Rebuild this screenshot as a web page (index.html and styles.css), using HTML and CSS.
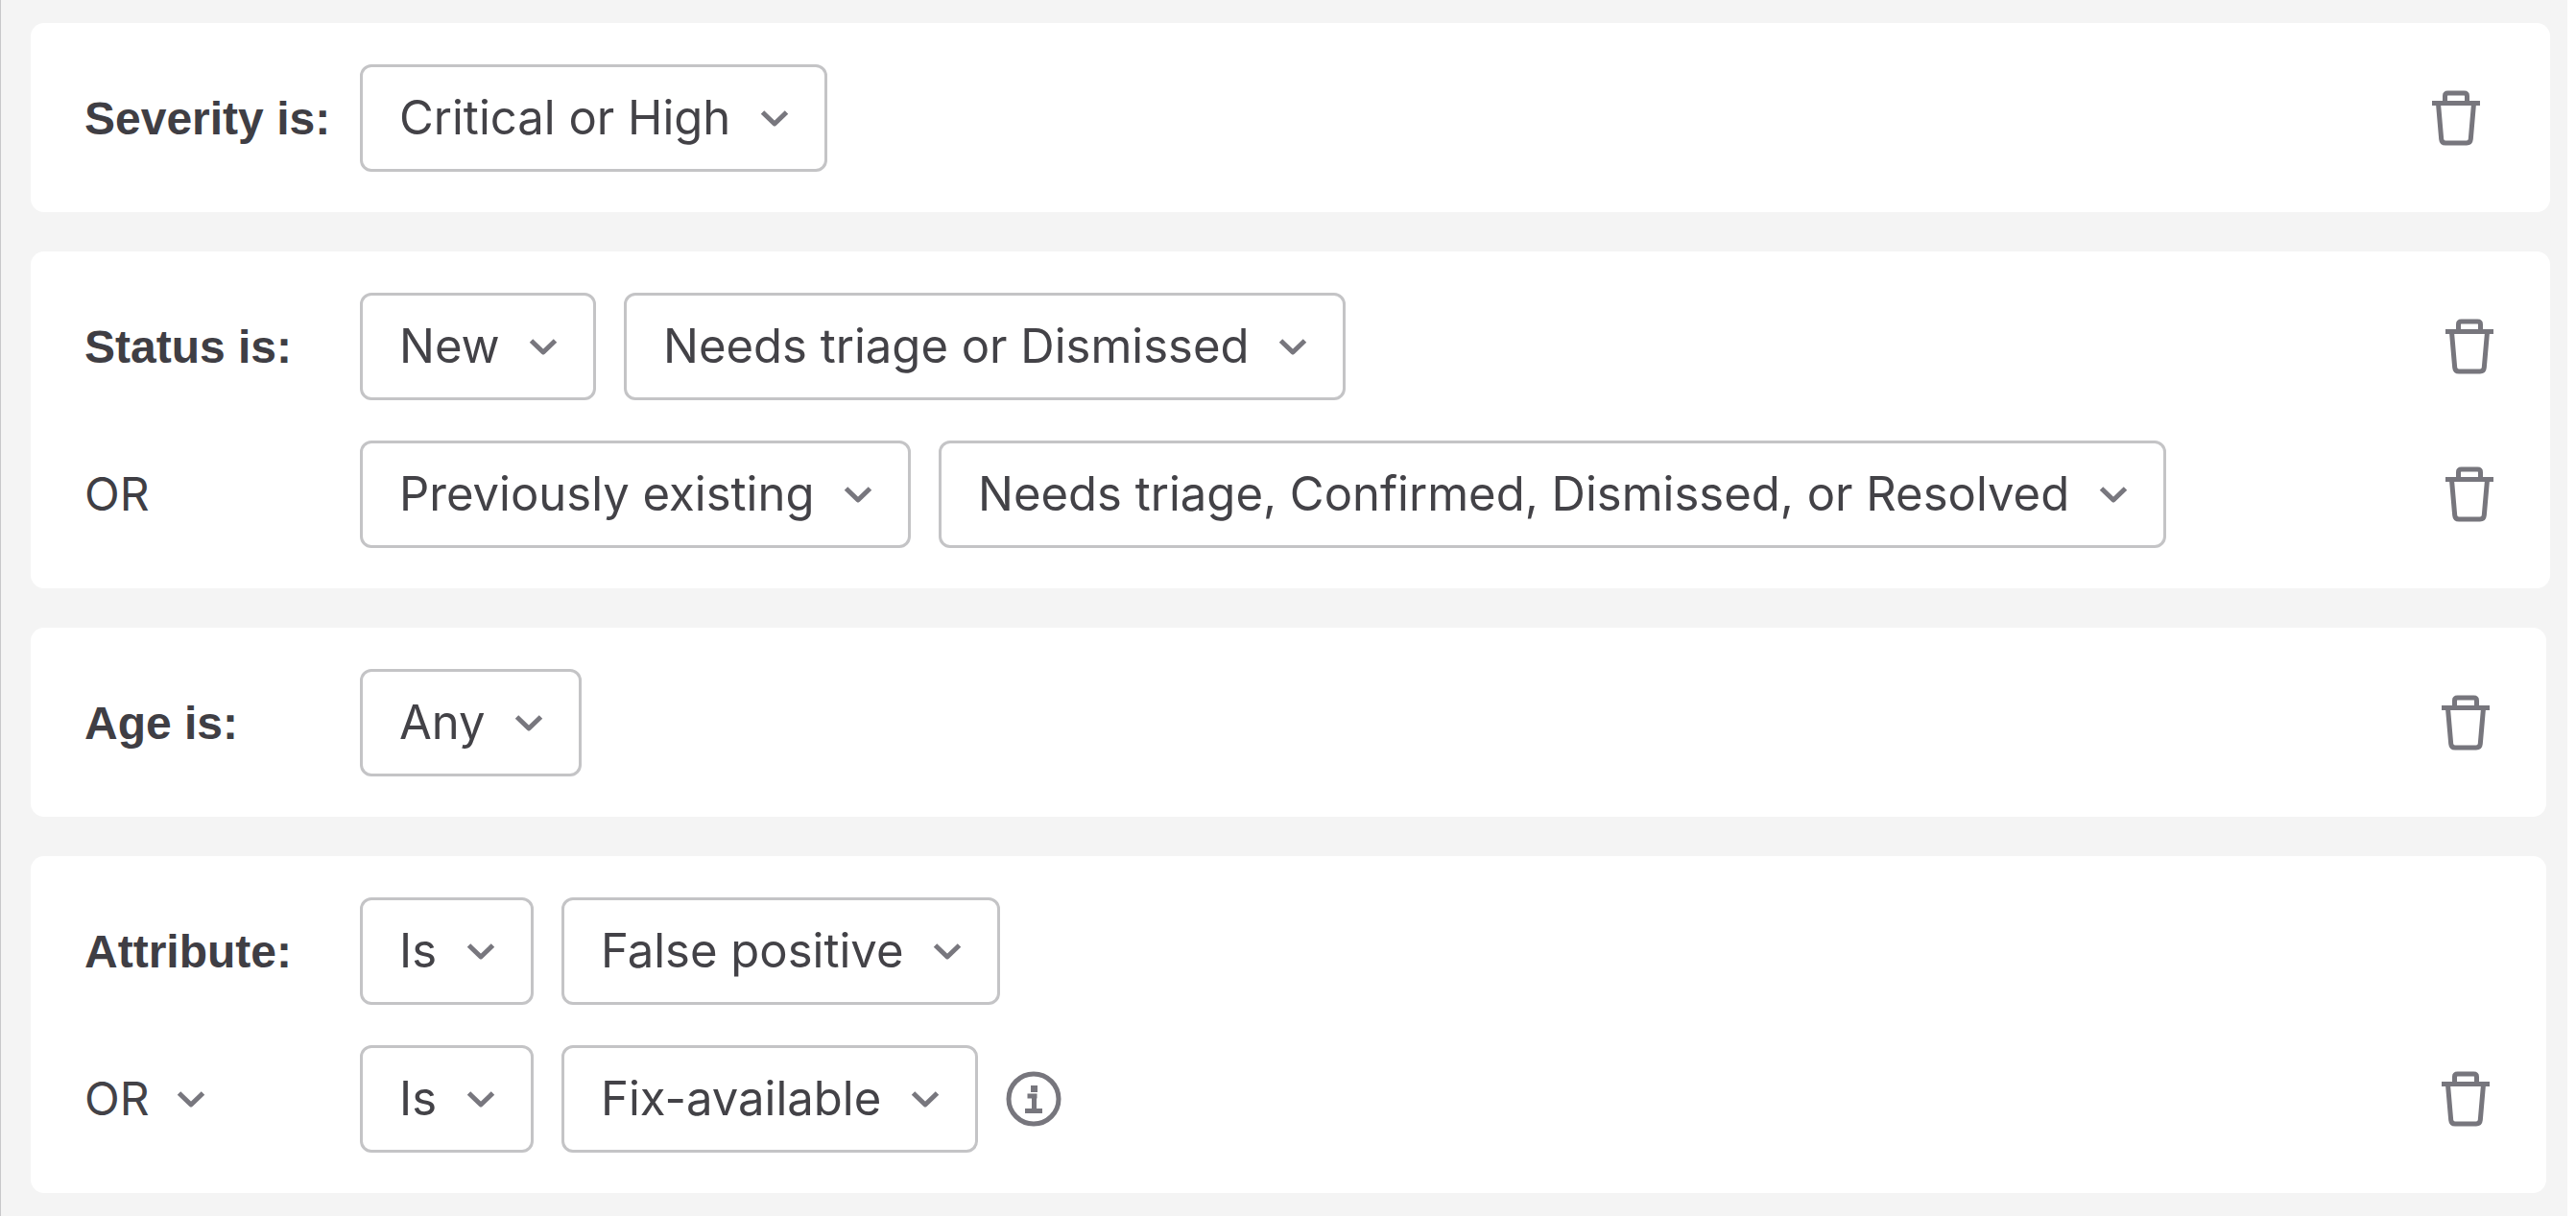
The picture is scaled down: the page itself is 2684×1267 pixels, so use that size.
FILE: index.html
```html
<!DOCTYPE html>
<html lang="en">
<head>
<meta charset="utf-8">
<title>Policy rule filters</title>
<link rel="stylesheet" href="styles.css">
</head>
<body>
<svg class="sprite" aria-hidden="true">
  <symbol id="chevron" viewBox="0 0 30 20"><path d="M2.500 4l12.500 12L27.500 4" fill="none" stroke="currentColor" stroke-width="5" stroke-linejoin="round"/></symbol>
  <symbol id="trash" viewBox="0 0 50 58"><path d="M0 13.500h50M13.500 13V6q0-3 3-3h17q3 0 3 3v7M6.500 14l3.200 37q.4 4 4.300 4h22q3.900 0 4.300-4L43.500 14" fill="none" stroke="currentColor" stroke-width="5" stroke-linejoin="round"/></symbol>
  <symbol id="info" viewBox="0 0 58 58"><circle cx="29" cy="29" r="26" fill="none" stroke="currentColor" stroke-width="5"/><path d="M22.500 26h10M29.500 24v17M20 41.500h18" fill="none" stroke="currentColor" stroke-width="5"/><path d="M26 15h7v7h-7z" fill="currentColor"/></symbol>
</svg>
<main class="panel">
  <section class="card">
    <div class="row row-single">
      <label class="label" for="severity">Severity is:</label>
      <span class="dropdown"><select id="severity"><option>Critical or High</option></select><svg class="chevron"><use href="#chevron"/></svg></span>
      <button class="remove" type="button" aria-label="Remove"><svg class="trash"><use href="#trash"/></svg></button>
    </div>
  </section>
  <section class="card">
    <div class="row">
      <label class="label" for="status">Status is:</label>
      <span class="dropdown"><select id="status"><option>New</option></select><svg class="chevron"><use href="#chevron"/></svg></span>
      <span class="dropdown"><select aria-label="New states"><option>Needs triage or Dismissed</option></select><svg class="chevron"><use href="#chevron"/></svg></span>
      <button class="remove" type="button" aria-label="Remove"><svg class="trash"><use href="#trash"/></svg></button>
    </div>
    <div class="row">
      <label class="label label-or" for="status-or">OR</label>
      <span class="dropdown"><select id="status-or"><option>Previously existing</option></select><svg class="chevron"><use href="#chevron"/></svg></span>
      <span class="dropdown"><select aria-label="Existing states"><option>Needs triage, Confirmed, Dismissed, or Resolved</option></select><svg class="chevron"><use href="#chevron"/></svg></span>
      <button class="remove" type="button" aria-label="Remove"><svg class="trash"><use href="#trash"/></svg></button>
    </div>
  </section>
  <section class="card card-narrow">
    <div class="row">
      <label class="label" for="age">Age is:</label>
      <span class="dropdown"><select id="age"><option>Any</option></select><svg class="chevron"><use href="#chevron"/></svg></span>
      <button class="remove" type="button" aria-label="Remove"><svg class="trash"><use href="#trash"/></svg></button>
    </div>
  </section>
  <section class="card card-narrow">
    <div class="row">
      <label class="label" for="attribute">Attribute:</label>
      <span class="dropdown"><select id="attribute"><option>Is</option></select><svg class="chevron"><use href="#chevron"/></svg></span>
      <span class="dropdown"><select aria-label="Attribute name"><option>False positive</option></select><svg class="chevron"><use href="#chevron"/></svg></span>
    </div>
    <div class="row">
      <span class="label label-or"><span class="dropdown dropdown-plain"><select aria-label="Operator"><option>OR</option></select><svg class="chevron"><use href="#chevron"/></svg></span></span>
      <span class="dropdown"><select aria-label="Second operator"><option>Is</option></select><svg class="chevron"><use href="#chevron"/></svg></span>
      <span class="dropdown"><select aria-label="Second attribute name"><option>Fix-available</option></select><svg class="chevron"><use href="#chevron"/></svg></span>
      <button class="help" type="button" aria-label="More information"><svg class="info"><use href="#info"/></svg></button>
      <button class="remove" type="button" aria-label="Remove"><svg class="trash"><use href="#trash"/></svg></button>
    </div>
  </section>
</main>
</body>
</html>
```
FILE: styles.css
```css
* {
  box-sizing: border-box;
}

body {
  margin: 0;
  background: #fff;
  color: #3f3e44;
  font-family: Inter, "Liberation Sans", sans-serif;
  font-size: 49px;
  line-height: 60px;
}

.sprite {
  position: absolute;
  width: 0;
  height: 0;
}

.panel {
  display: flex;
  flex-direction: column;
  gap: 41px;
  min-height: 100vh;
  margin-right: 9px;
  padding: 24px 18px 24px 31px;
  border-left: 1px solid #c8c8ca;
  background: #f4f4f4;
}

.card {
  display: flex;
  flex-direction: column;
  gap: 42px;
  padding: 43px 59px 42px 56px;
  border-radius: 14px;
  background: #fff;
}

.card-narrow {
  margin-right: 4px;
}

.row {
  display: flex;
  align-items: center;
  gap: 29px;
  min-height: 112px;
}

.row-single {
  padding-right: 14px;
}

.label {
  flex: none;
  width: 258px;
  padding-top: 2px;
  font-family: "Liberation Sans", Arial, sans-serif;
  font-size: 48px;
  font-weight: 700;
  white-space: nowrap;
}

.label-or {
  padding-top: 0;
  font-family: Inter, "Liberation Sans", sans-serif;
  font-weight: 400;
}

.dropdown {
  display: inline-grid;
  align-items: center;
  color: #434247;
}

.dropdown select {
  grid-area: 1 / 1;
  height: 112px;
  margin: 0;
  padding: 0 97px 0 38px;
  border: 3px solid #c4c4c6;
  border-radius: 12px;
  background: #fff;
  color: inherit;
  font: inherit;
  appearance: none;
}

.chevron {
  grid-area: 1 / 1;
  justify-self: end;
  width: 30px;
  height: 20px;
  margin-right: 40px;
  color: #78777e;
  pointer-events: none;
}

.dropdown-plain {
  vertical-align: top;
}

.dropdown-plain select {
  height: 60px;
  padding: 0 58px 0 0;
  border: 0;
}

.dropdown-plain .chevron {
  margin-right: 0;
}

.remove,
.help {
  display: flex;
  padding: 0;
  border: 0;
  background: none;
  color: #77767d;
}

.remove {
  margin-left: auto;
}

.trash {
  width: 50px;
  height: 58px;
}

.info {
  width: 58px;
  height: 58px;
}
```
